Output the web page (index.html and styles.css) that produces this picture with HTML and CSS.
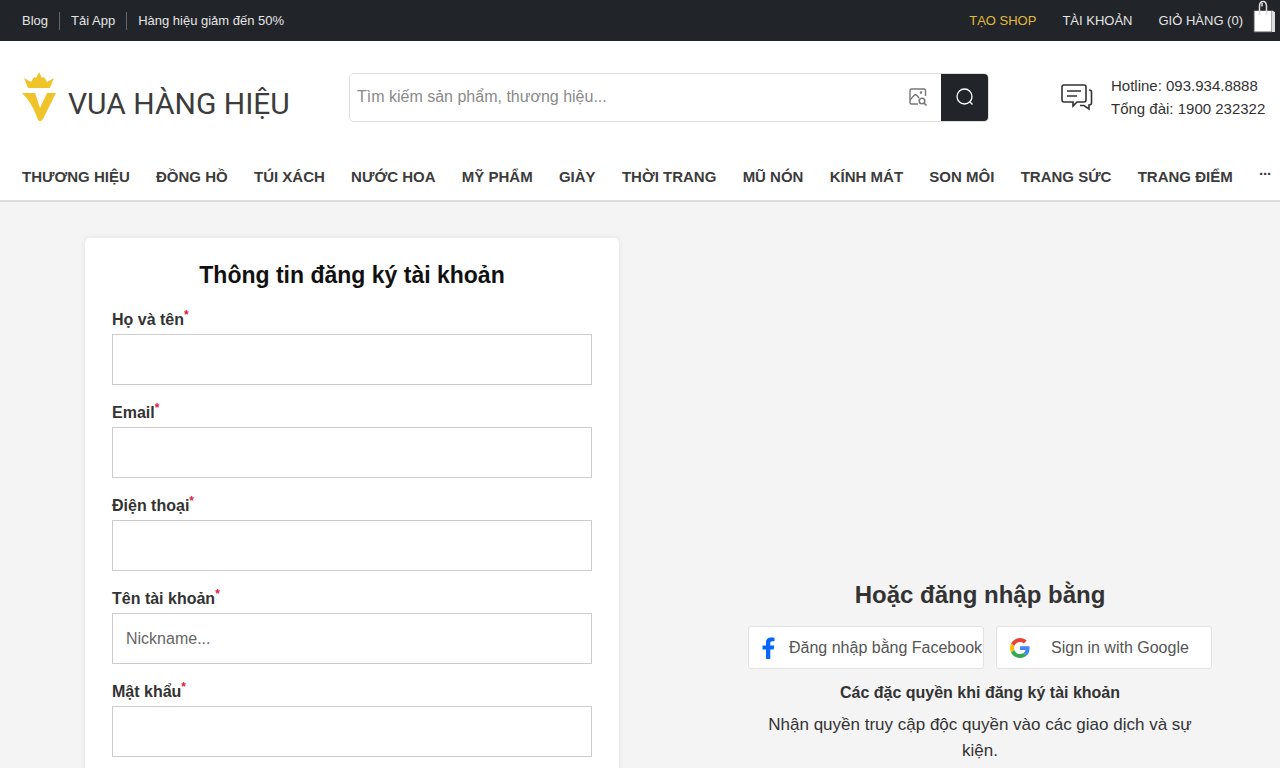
FILE: index.html

```html
<!DOCTYPE html>
<html lang="vi">
<head>
    <meta charset="UTF-8">
    <title>Vua Hàng Hiệu - Đăng ký tài khoản</title>
    <link rel="stylesheet" href="styles.css">
</head>
<body>
    <div class="topbar">
        <div class="topbar-left">
            <a href="#">Blog</a>
            <a href="#">Tải App</a>
            <a href="#">Hàng hiệu giảm đến 50%</a>
        </div>
        <div class="topbar-right">
            <a href="#" class="shop-link">TẠO SHOP</a>
            <a href="#">TÀI KHOẢN</a>
            <a href="#">GIỎ HÀNG (0)</a>
            <svg class="cart-icon" width="24" height="33" viewBox="0 0 24 33" fill="none">
                <path d="M2 10.5H20V32H2Z" fill="#fff" stroke="#555" stroke-width="1"/>
                <path d="M20 10.5L23 12V32L20 32Z" fill="#ddd"/>
                <path d="M7.5 15V6.5C7.5 3.5 9 1.5 11 1.5S14.500 3.500 14.500 6.500V15" stroke="#ddd" stroke-width="1.500"/>
                <path d="M10 6.500V3" stroke="#ddd" stroke-width="1.500"/>
            </svg>
        </div>
    </div>

    <header class="header">
        <a href="#" class="logo">
            <svg width="34" height="50" viewBox="0 0 34 50">
                <path d="M2 6L9 10L12 5L14 6L17 0L20 6L22 5L25 10L32 6L28 16H6Z" fill="#efc42b"/>
                <path d="M0 21H13C15 26 16 31 18 36C20 31 23 26 25 21H34L21 47C20 49 17 50 16 48C13 39 9 30 0 21Z" fill="#efc42b"/>
            </svg>
            <span class="logo-text">VUA HÀNG HIỆU</span>
        </a>
        <form class="search">
            <input type="text" class="search-input" placeholder="Tìm kiếm sản phẩm, thương hiệu...">
            <svg class="search-image" width="20" height="20" viewBox="0 0 20 20" fill="none" stroke="#777" stroke-width="1.400">
                <path d="M10 17H3.500C2.500 17 2 16.500 2 15.500V3.500C2 2.500 2.500 2 3.500 2H16C17 2 17.500 2.500 17.500 3.500V9"/>
                <path d="M2 13L6 8.500C7 7.500 8 7.500 9 8.500L11 11"/>
                <circle cx="13" cy="5.500" r="0.600"/>
                <circle cx="14" cy="14" r="2.800" stroke-width="1.600"/>
                <path d="M16 16L18.500 18.500" stroke-width="1.600"/>
            </svg>
            <button type="button" class="search-btn">
                <svg width="22" height="22" viewBox="0 0 22 22" fill="none" stroke="#fff" stroke-width="1.300">
                    <circle cx="10.500" cy="10.500" r="7.500"/>
                    <path d="M16 16L18.500 18.500"/>
                </svg>
            </button>
        </form>
        <div class="hotline">
            <svg width="32" height="28" viewBox="0 0 32 28" fill="none" stroke="#333" stroke-width="1.600">
                <path d="M3 2H23C24 2 25 3 25 4V17C25 18 24 19 23 19H16L12 23V19H3C2 19 1 18 1 17V4C1 3 2 2 3 2Z"/>
                <path d="M6 8H20M6 13H16"/>
                <path d="M28 7C29.500 7 30.500 8 30.500 9V20C30.500 21.500 29.500 22 28 22V26L23 22.500H19"/>
            </svg>
            <div class="hotline-text">
                <div>Hotline: 093.934.8888</div>
                <div>Tổng đài: 1900 232322</div>
            </div>
        </div>
    </header>

    <nav class="nav">
        <a href="#">THƯƠNG HIỆU</a>
        <a href="#">ĐỒNG HỒ</a>
        <a href="#">TÚI XÁCH</a>
        <a href="#">NƯỚC HOA</a>
        <a href="#">MỸ PHẨM</a>
        <a href="#">GIÀY</a>
        <a href="#">THỜI TRANG</a>
        <a href="#">MŨ NÓN</a>
        <a href="#">KÍNH MÁT</a>
        <a href="#">SON MÔI</a>
        <a href="#">TRANG SỨC</a>
        <a href="#">TRANG ĐIỂM</a>
        <a href="#" class="nav-more">···</a>
    </nav>

    <main class="main">
        <form class="register-card">
            <h2>Thông tin đăng ký tài khoản</h2>
            <div class="field">
                <label>Họ và tên<sup>*</sup></label>
                <input type="text">
            </div>
            <div class="field">
                <label>Email<sup>*</sup></label>
                <input type="text">
            </div>
            <div class="field">
                <label>Điện thoại<sup>*</sup></label>
                <input type="text">
            </div>
            <div class="field">
                <label>Tên tài khoản<sup>*</sup></label>
                <input type="text" placeholder="Nickname...">
            </div>
            <div class="field">
                <label>Mật khẩu<sup>*</sup></label>
                <input type="password">
            </div>
        </form>

        <section class="social">
            <h3>Hoặc đăng nhập bằng</h3>
            <div class="social-buttons">
                <a href="#" class="social-btn fb-btn">
                    <svg width="14" height="22" viewBox="0 0 14 22">
                        <path d="M4 22V12.500H0.500V8.500H4V5.500C4 2 6 0.500 9 0.500C10.500 0.500 12 0.700 12.500 0.800V4.300H10.300C8.800 4.300 8.300 5 8.300 6.300V8.500H12.300L11.700 12.500H8.300V22Z" fill="#0866ff"/>
                    </svg>
                    <span>Đăng nhập bằng Facebook</span>
                </a>
                <a href="#" class="social-btn gg-btn">
                    <svg width="20" height="20" viewBox="0 0 48 48">
                        <path fill="#EA4335" d="M24 9.500c3.540 0 6.710 1.220 9.210 3.600l6.850-6.850C35.900 2.380 30.470 0 24 0 14.620 0 6.510 5.380 2.560 13.220l7.980 6.190C12.430 13.720 17.740 9.500 24 9.500z"/>
                        <path fill="#4285F4" d="M46.980 24.550c0-1.570-.150-3.090-.380-4.550H24v9.020h12.940c-.580 2.960-2.260 5.480-4.780 7.180l7.730 6c4.510-4.180 7.090-10.360 7.090-17.650z"/>
                        <path fill="#FBBC05" d="M10.530 28.590c-.480-1.450-.760-2.990-.760-4.590s.270-3.140.760-4.590l-7.980-6.190C.920 16.460 0 20.120 0 24c0 3.880.920 7.540 2.560 10.780l7.970-6.190z"/>
                        <path fill="#34A853" d="M24 48c6.480 0 11.930-2.130 15.890-5.810l-7.730-6c-2.150 1.450-4.920 2.300-8.160 2.300-6.260 0-11.570-4.220-13.470-9.910l-7.980 6.190C6.510 42.620 14.620 48 24 48z"/>
                    </svg>
                    <span>Sign in with Google</span>
                </a>
            </div>
            <h4>Các đặc quyền khi đăng ký tài khoản</h4>
            <p>Nhận quyền truy cập độc quyền vào các giao dịch và sự kiện.</p>
        </section>
    </main>
</body>
</html>
```

FILE: styles.css

```css
html, body {
    height: 100%;
    overflow: hidden;
}

body {
    margin: 0;
    padding: 0;
    font-family: "Liberation Sans", Arial, sans-serif;
    background-color: #f4f4f4;
    color: #333;
}

a {
    color: inherit;
    text-decoration: none;
}

.topbar {
    display: flex;
    justify-content: space-between;
    align-items: center;
    height: 41px;
    padding: 0 4px 0 22px;
    background-color: #212529;
    color: #e4e4e4;
    font-size: 13px;
}

.topbar-left {
    display: flex;
    align-items: center;
}

.topbar-left a {
    padding: 0 11px;
    border-left: 1px solid #666;
    line-height: 18px;
}

.topbar-left a:first-child {
    padding-left: 0;
    border-left: none;
}

.topbar-right {
    display: flex;
    align-items: center;
    gap: 26px;
}

.shop-link {
    color: #e2b93b;
}

.cart-icon {
    margin: -8px 0 0 -17px;
}

.header {
    display: flex;
    align-items: center;
    height: 112px;
    box-sizing: border-box;
    padding: 0 4px 0 22px;
    background-color: #fff;
}

.logo {
    display: flex;
    align-items: flex-start;
    gap: 12px;
    width: 327px;
}

.logo-text {
    margin-top: 14px;
    font-family: Roboto, sans-serif;
    font-size: 30px;
    line-height: 36px;
    color: #3c3c3c;
}

.search {
    display: flex;
    align-items: center;
    position: relative;
    width: 640px;
    height: 49px;
    box-sizing: border-box;
    border: 1px solid #ddd;
    border-radius: 5px;
    overflow: hidden;
}

.search-input {
    flex: 1;
    min-width: 0;
    height: 100%;
    padding: 0 7px;
    border: none;
    outline: none;
    font-family: inherit;
    font-size: 16px;
}

.search-input::placeholder {
    color: #8a8a8a;
}

.search-image {
    margin-right: 13px;
}

.search-btn {
    display: flex;
    align-items: center;
    justify-content: center;
    width: 47px;
    height: 100%;
    padding: 0;
    border: none;
    background-color: #212529;
}

.hotline {
    display: flex;
    align-items: center;
    gap: 18px;
    margin-left: 72px;
}

.hotline-text {
    font-size: 15px;
    line-height: 23px;
    white-space: nowrap;
}

.nav {
    display: flex;
    justify-content: space-between;
    align-items: center;
    height: 47px;
    padding: 0 9px 0 22px;
    background-color: #fff;
    border-bottom: 2px solid #ddd;
    font-size: 15px;
    font-weight: bold;
    color: #3c3c3c;
}

.nav-more {
    letter-spacing: -1px;
    margin-top: -6px;
}

.main {
    display: flex;
    align-items: flex-start;
    padding: 36px 0 0 85px;
}

.register-card {
    width: 534px;
    box-sizing: border-box;
    padding: 23px 27px 30px;
    background-color: #fff;
    border-radius: 5px;
    box-shadow: 0 0 6px rgba(0, 0, 0, 0.08);
}

.register-card h2 {
    margin: 0 0 21px;
    font-size: 23px;
    line-height: 28px;
    text-align: center;
    color: #111;
}

.field {
    margin-bottom: 18px;
}

.field label {
    display: block;
    margin-bottom: 4px;
    font-size: 16px;
    font-weight: bold;
    line-height: 20px;
}

.field sup {
    color: #e5173f;
    font-size: 12px;
    line-height: 0;
}

.field input {
    display: block;
    width: 100%;
    height: 51px;
    box-sizing: border-box;
    padding: 0 13px;
    border: 1px solid #ccc;
    font-family: inherit;
    font-size: 16px;
}

.field input::placeholder {
    color: #666;
}

.social {
    width: 464px;
    margin: 343px 0 0 129px;
    text-align: center;
}

.social h3 {
    margin: 0 0 17px;
    font-size: 24px;
    line-height: 28px;
}

.social-buttons {
    display: flex;
    justify-content: space-between;
}

.social-btn {
    display: flex;
    align-items: center;
    height: 43px;
    box-sizing: border-box;
    background-color: #fff;
    border: 1px solid #e2e2e2;
    border-radius: 3px;
    font-size: 16px;
    color: #555;
}

.fb-btn {
    width: 236px;
    gap: 13px;
    padding-left: 13px;
}

.gg-btn {
    width: 216px;
    gap: 21px;
    padding-left: 13px;
}

.social h4 {
    margin: 14px 0 0;
    font-size: 16px;
    line-height: 20px;
}

.social p {
    margin: 9px 0 0;
    padding: 0 15px;
    font-size: 17px;
    line-height: 26px;
}
```
